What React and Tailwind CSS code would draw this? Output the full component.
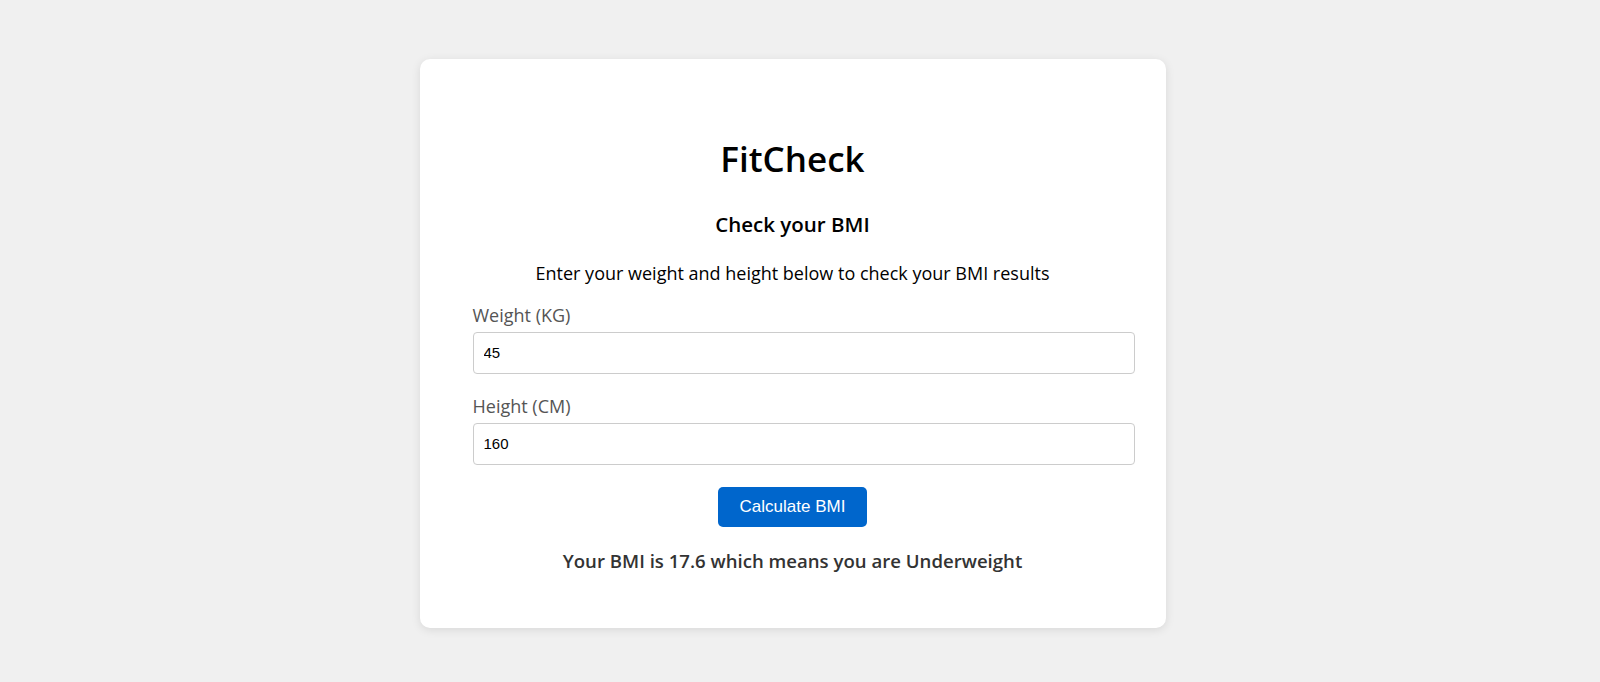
import { useState } from "react";

const sans = { fontFamily: '"Open Sans", "Noto Sans", sans-serif' };

function Field({ label, value, onChange }) {
  return (
    <div className="mb-[20px]">
      <label className="block text-[18px] leading-[24px] text-[#555] mb-[5px]">{label}</label>
      <input
        type="text"
        value={value}
        onChange={(e) => onChange(e.target.value)}
        className="box-content block w-full h-[20px] py-[10px] px-[10px] border border-[#ccc] rounded-[4px] bg-white text-[15px] text-black outline-none"
        style={{ fontFamily: '"Liberation Sans", Arial, sans-serif' }}
      />
    </div>
  );
}

export default function App() {
  const [weight, setWeight] = useState("45");
  const [height, setHeight] = useState("160");
  const [result, setResult] = useState("Your BMI is 17.6 which means you are Underweight");

  const calculate = () => {
    const w = parseFloat(weight);
    const h = parseFloat(height) / 100;
    if (!w || !h) return;
    const bmi = w / (h * h);
    let label = "Normal weight";
    if (bmi < 18.5) label = "Underweight";
    else if (bmi >= 25 && bmi < 30) label = "Overweight";
    else if (bmi >= 30) label = "Obese";
    setResult(`Your BMI is ${bmi.toFixed(1)} which means you are ${label}`);
  };

  return (
    <div className="min-h-screen bg-[#f0f0f0] pt-[59px] pr-[15px]" style={sans}>
      <div className="mx-auto w-[746px] bg-white rounded-[10px] shadow-[0_2px_10px_rgba(0,0,0,0.1)] px-[53px] pt-[74px] pb-[55px]">
        <h1 className="text-center text-[35px] leading-[52px] font-semibold text-black">FitCheck</h1>
        <h2 className="text-center text-[20.5px] leading-[27px] font-semibold text-black mt-[26px]">Check your BMI</h2>
        <p className="text-center text-[18px] leading-[24px] text-black mt-[23px] mb-[18px]">
          Enter your weight and height below to check your BMI results
        </p>
        <Field label="Weight (KG)" value={weight} onChange={setWeight} />
        <Field label="Height (CM)" value={height} onChange={setHeight} />
        <div className="flex justify-center pt-[2px]">
          <button
            onClick={calculate}
            className="h-[40px] px-[22px] rounded-[5px] bg-[#0066cc] text-white text-[17px]"
            style={{ fontFamily: '"Liberation Sans", Arial, sans-serif' }}
          >
            Calculate BMI
          </button>
        </div>
        <p className="text-center text-[18.6px] leading-[24px] font-semibold text-[#333] mt-[22px]">{result}</p>
      </div>
    </div>
  );
}
